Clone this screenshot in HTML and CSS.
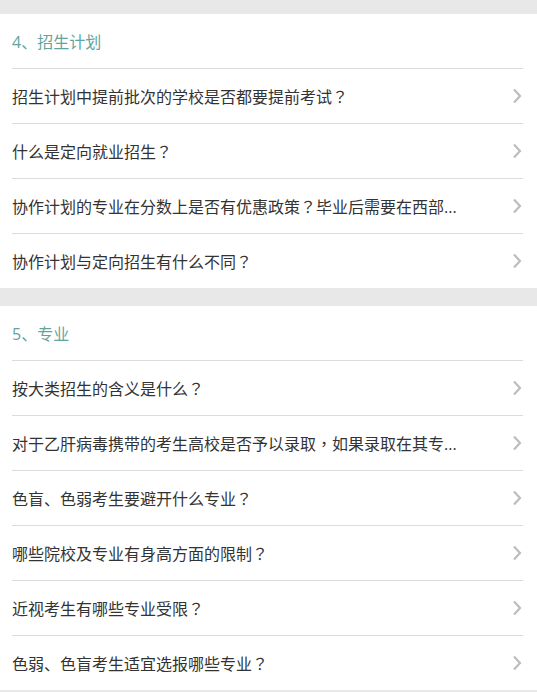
FILE: index.html
```html
<!DOCTYPE html>
<html lang="zh-CN">
<head>
<meta charset="utf-8">
<title>常见问题</title>
<link rel="stylesheet" href="styles.css">
</head>
<body>
<div class="page">
  <section class="group">
    <h2 class="group-title">4、招生计划</h2>
    <ul class="list">
      <li class="item"><span class="text">招生计划中提前批次的学校是否都要提前考试<span class="p" lang="zh-TW">？</span></span><svg class="chev" viewBox="0 0 10 16"><polyline points="2,1.5 8,8 2,14.5"/></svg></li>
      <li class="item"><span class="text">什么是定向就业招生<span class="p" lang="zh-TW">？</span></span><svg class="chev" viewBox="0 0 10 16"><polyline points="2,1.5 8,8 2,14.5"/></svg></li>
      <li class="item"><span class="text">协作计划的专业在分数上是否有优惠政策<span class="p" lang="zh-TW">？</span>毕业后需要在西部...</span><svg class="chev" viewBox="0 0 10 16"><polyline points="2,1.5 8,8 2,14.5"/></svg></li>
      <li class="item"><span class="text">协作计划与定向招生有什么不同<span class="p" lang="zh-TW">？</span></span><svg class="chev" viewBox="0 0 10 16"><polyline points="2,1.5 8,8 2,14.5"/></svg></li>
    </ul>
  </section>
  <section class="group">
    <h2 class="group-title">5、专业</h2>
    <ul class="list">
      <li class="item"><span class="text">按大类招生的含义是什么<span class="p" lang="zh-TW">？</span></span><svg class="chev" viewBox="0 0 10 16"><polyline points="2,1.5 8,8 2,14.5"/></svg></li>
      <li class="item"><span class="text">对于乙肝病毒携带的考生高校是否予以录取<span class="p" lang="zh-TW">，</span>如果录取在其专...</span><svg class="chev" viewBox="0 0 10 16"><polyline points="2,1.5 8,8 2,14.5"/></svg></li>
      <li class="item"><span class="text">色盲、色弱考生要避开什么专业<span class="p" lang="zh-TW">？</span></span><svg class="chev" viewBox="0 0 10 16"><polyline points="2,1.5 8,8 2,14.5"/></svg></li>
      <li class="item"><span class="text">哪些院校及专业有身高方面的限制<span class="p" lang="zh-TW">？</span></span><svg class="chev" viewBox="0 0 10 16"><polyline points="2,1.5 8,8 2,14.5"/></svg></li>
      <li class="item"><span class="text">近视考生有哪些专业受限<span class="p" lang="zh-TW">？</span></span><svg class="chev" viewBox="0 0 10 16"><polyline points="2,1.5 8,8 2,14.5"/></svg></li>
      <li class="item"><span class="text">色弱、色盲考生适宜选报哪些专业<span class="p" lang="zh-TW">？</span></span><svg class="chev" viewBox="0 0 10 16"><polyline points="2,1.5 8,8 2,14.5"/></svg></li>
    </ul>
  </section>
</div>
</body>
</html>
```
FILE: styles.css
```css
html, body {
  margin: 0;
  padding: 0;
  background: #e8e8e8;
}
body {
  font-family: "Open Sans", "Noto Sans CJK SC", sans-serif;
  color: #333;
}
.page {
  padding-top: 14px;
  display: flex;
  flex-direction: column;
  gap: 18px;
}
.group {
  background: #fff;
  padding: 0 14px 0 12px;
}
.group-title {
  margin: 0;
  height: 54px;
  display: flex;
  align-items: center;
  font-size: 16px;
  font-weight: normal;
  color: #5fa59d;
  border-bottom: 1px solid #dcdcdc;
}
.list {
  list-style: none;
  margin: 0;
  padding: 0;
}
.item {
  height: 54px;
  display: flex;
  align-items: center;
  justify-content: space-between;
  border-bottom: 1px solid #dcdcdc;
  font-size: 16px;
}
.item:last-child {
  border-bottom: none;
}
.text {
  white-space: nowrap;
}
.p {
  font-family: "Noto Sans CJK TC", sans-serif;
}
.chev {
  width: 10px;
  height: 16px;
  margin-right: 1px;
  fill: none;
  stroke: #bdbdbd;
  stroke-width: 2.2;
}
```
